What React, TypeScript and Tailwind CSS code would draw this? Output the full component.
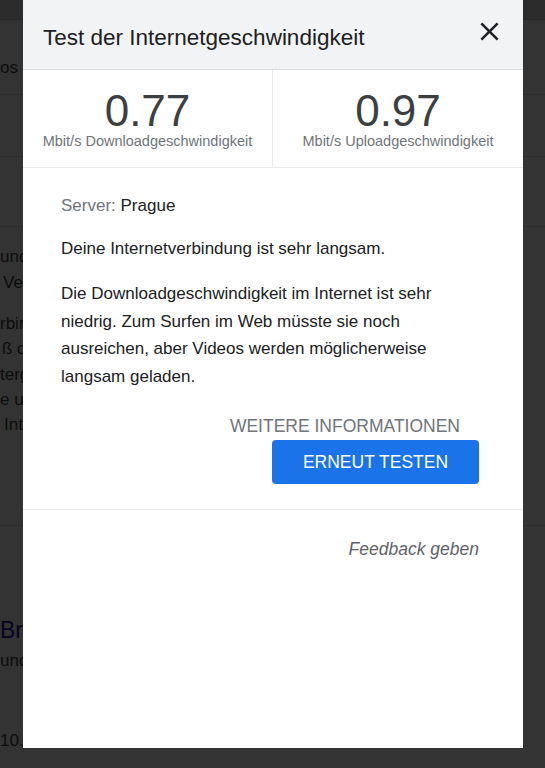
import React from "react";

function CloseIcon() {
  return (
    <svg width="31" height="31" viewBox="0 0 24 24" aria-hidden="true">
      <path
        fill="#202124"
        d="M19 6.41L17.59 5 12 10.59 6.41 5 5 6.41 10.59 12 5 17.59 6.41 19 12 13.41 17.59 19 19 17.59 13.41 12z"
      />
    </svg>
  );
}

function BackgroundPage() {
  return (
    <div className="flex flex-col text-[17px] text-[#3c4043]">
      <div className="h-[20px] bg-[#dcdcdc] border-b border-[#c8c8c8]" />
      <div className="h-[75px] border-b border-[#dadce0] pt-[36px]">
        <div className="leading-[24px] whitespace-nowrap">os</div>
      </div>
      <div className="h-[62px] border-b border-[#dadce0]" />
      <div className="h-[70px] border-b border-[#dadce0]" />
      <div className="h-[299px] border-b border-[#dadce0] pt-[17px] whitespace-nowrap">
        <div className="leading-[26px]">und</div>
        <div className="leading-[26px] ml-[3px]">Ver</div>
        <div className="mt-[15px] leading-[25.3px]">rbin</div>
        <div className="leading-[25.3px] ml-[2px]">ß de</div>
        <div className="leading-[25.3px]">terg</div>
        <div className="leading-[25.3px]">e un</div>
        <div className="leading-[25.3px] ml-[4px]">Int</div>
      </div>
      <div className="pt-[89px] whitespace-nowrap">
        <div className="text-[23px] leading-[30px] text-[#1a0dab]">Brei</div>
        <div className="mt-[4px] leading-[24px]">und</div>
        <div className="mt-[56px] leading-[24px]">10.20</div>
      </div>
    </div>
  );
}

export default function App() {
  return (
    <div className="relative w-[545px] h-[768px] overflow-hidden bg-white font-['Liberation_Sans',Arial,sans-serif]">
      <BackgroundPage />
      <div className="absolute inset-0 bg-black/80" />
      <div className="absolute left-[23px] top-0 w-[500px] h-[748px] bg-white flex flex-col">
        <div className="h-[70px] bg-[#f1f3f4] border-b border-[#dadce0] flex items-start justify-between pl-[20px] pr-[18px]">
          <h1 className="pt-[24px] text-[22.5px] leading-[28px] text-[#202124]">Test der Internetgeschwindigkeit</h1>
          <button className="mt-[16px]" aria-label="Schließen">
            <CloseIcon />
          </button>
        </div>
        <div className="grid grid-cols-2 h-[98px] border-b border-[#ebebeb]">
          <div className="flex flex-col items-center pt-[19px] border-r border-[#ebebeb]">
            <div className="text-[44px] leading-[44px] text-[#3c4043]">0.77</div>
            <div className="text-[14.5px] leading-[16px] text-[#70757a]">Mbit/s Downloadgeschwindigkeit</div>
          </div>
          <div className="flex flex-col items-center pt-[19px]">
            <div className="text-[44px] leading-[44px] text-[#3c4043]">0.97</div>
            <div className="text-[14.5px] leading-[16px] text-[#70757a]">Mbit/s Uploadgeschwindigkeit</div>
          </div>
        </div>
        <div className="pl-[38px] pr-[44px] pt-[24px] pb-[25px] border-b border-[#ebebeb] text-[17px] leading-[27.5px] text-[#202124]">
          <p>
            <span className="text-[#70757a]">Server:</span> Prague
          </p>
          <p className="mt-[15px]">Deine Internetverbindung ist sehr langsam.</p>
          <p className="mt-[18px]">
            Die Downloadgeschwindigkeit im Internet ist sehr niedrig. Zum Surfen im Web müsste sie noch ausreichen, aber
            Videos werden möglicherweise langsam geladen.
          </p>
          <div className="mt-[24px] flex flex-col items-end">
            <a className="mr-[19px] text-[17.5px] leading-[24px] text-[#70757a]">WEITERE INFORMATIONEN</a>
            <button className="mt-[2px] w-[207px] h-[44px] rounded-[4px] bg-[#1a73e8] text-white text-[17.5px] leading-[24px]">
              ERNEUT TESTEN
            </button>
          </div>
        </div>
        <div className="pt-[27px] pr-[44px] flex justify-end">
          <a className="italic text-[17.5px] leading-[24px] text-[#5f6368]">Feedback geben</a>
        </div>
      </div>
    </div>
  );
}
